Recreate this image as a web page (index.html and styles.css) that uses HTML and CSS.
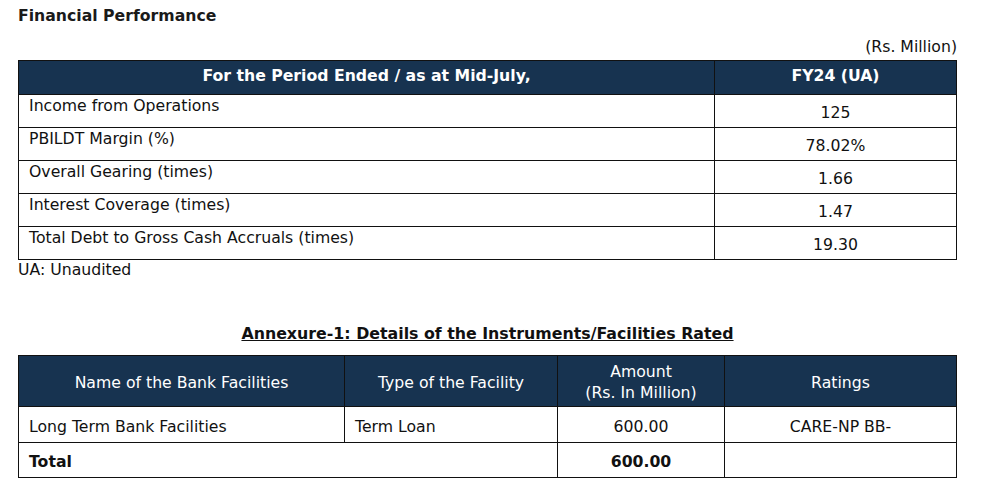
FILE: index.html
```html
<!DOCTYPE html>
<html>
<head>
<meta charset="utf-8">
<link rel="stylesheet" href="styles.css">
</head>
<body>
<div class="page">
  <h2 class="title">Financial Performance</h2>
  <div class="unit">(Rs. Million)</div>
  <table class="fin">
    <colgroup><col class="c1"><col class="c2"></colgroup>
    <thead>
      <tr><th>For the Period Ended / as at Mid-July,</th><th>FY24 (UA)</th></tr>
    </thead>
    <tbody>
      <tr><td class="lbl">Income from Operations</td><td class="val">125</td></tr>
      <tr><td class="lbl">PBILDT Margin (%)</td><td class="val">78.02%</td></tr>
      <tr><td class="lbl">Overall Gearing (times)</td><td class="val">1.66</td></tr>
      <tr><td class="lbl">Interest Coverage (times)</td><td class="val">1.47</td></tr>
      <tr><td class="lbl">Total Debt to Gross Cash Accruals (times)</td><td class="val">19.30</td></tr>
    </tbody>
  </table>
  <div class="note">UA: Unaudited</div>

  <h3 class="annex">Annexure-1: Details of the Instruments/Facilities Rated</h3>
  <table class="ann">
    <colgroup><col class="a1"><col class="a2"><col class="a3"><col class="a4"></colgroup>
    <thead>
      <tr><th>Name of the Bank Facilities</th><th>Type of the Facility</th><th>Amount<br>(Rs. In Million)</th><th>Ratings</th></tr>
    </thead>
    <tbody>
      <tr class="row"><td>Long Term Bank Facilities</td><td>Term Loan</td><td class="ctr">600.00</td><td class="ctr">CARE-NP BB-</td></tr>
      <tr class="total"><td colspan="2">Total</td><td class="ctr">600.00</td><td></td></tr>
    </tbody>
  </table>
</div>
</body>
</html>
```
FILE: styles.css
```css
html, body { margin: 0; padding: 0; background: #fff; }
body { font-family: "DejaVu Sans", Verdana, sans-serif; color: #111; font-size: 15.7px; }
.page { padding: 6px 25px 0 18px; }
.title { margin: 0; font-size: 15.7px; font-weight: bold; line-height: 20px; color: #1a1a1a; }
.unit { text-align: right; line-height: 18px; margin: 12px 0 4px; }
table { border-collapse: collapse; width: 939px; table-layout: fixed; }
td, th { border: 1px solid #111; padding: 0; line-height: 20px; }
.fin .c1 { width: 696px; }
.fin thead tr { height: 34px; }
.fin th { background: #173350; color: #fff; font-weight: bold; text-align: center; vertical-align: middle; padding-bottom: 3px; }
.fin tbody tr { height: 33px; }
.fin .lbl { padding-left: 10px; vertical-align: top; padding-top: 1px; }
.fin .val { text-align: center; vertical-align: middle; padding-top: 3px; }
.note { line-height: 20px; }
.annex { margin: 44px 0 11px; text-align: center; font-size: 15.8px; font-weight: bold; text-decoration: underline; line-height: 20px; }
.ann .a1 { width: 326px; }
.ann .a2 { width: 213px; }
.ann .a3 { width: 167px; }
.ann thead tr { height: 51px; }
.ann th { background: #173350; color: #fff; font-weight: normal; text-align: center; line-height: 21px; padding-top: 2px; }
.ann .row { height: 36px; }
.ann .total { height: 35px; }
.ann td { padding-left: 10px; padding-top: 4px; }
.ann td.ctr { text-align: center; padding-left: 0; }
.ann .total td { font-weight: bold; }
```
